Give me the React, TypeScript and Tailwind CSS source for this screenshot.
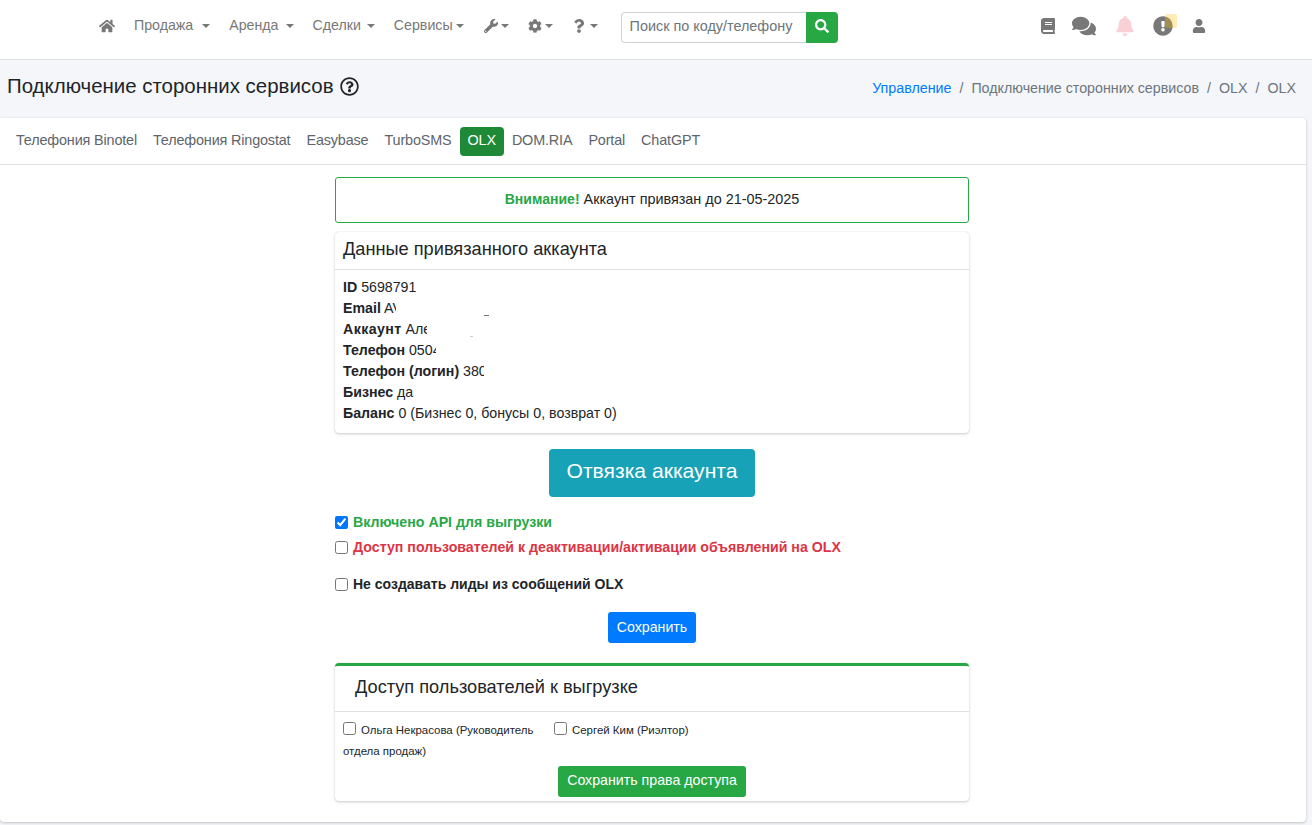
import { FaHome, FaWrench, FaCog, FaQuestion, FaSearch, FaBook, FaComments, FaBell, FaExclamationCircle, FaUser, FaRegQuestionCircle } from 'react-icons/fa';

const Caret = ({ ml }: { ml: string }) => (
  <span className={`inline-block align-[2px] border-t-[4.8px] border-x-[4.8px] border-x-transparent border-t-[#787878] ${ml}`} />
);

const tabs = ['Телефония Binotel', 'Телефония Ringostat', 'Easybase', 'TurboSMS', 'OLX', 'DOM.RIA', 'Portal', 'ChatGPT'];

function Nav() {
  return (
    <nav className="h-[60px] bg-white border-b border-[#dee2e6] flex items-start shrink-0">
      <div className="flex items-center h-[52px] text-[14.2px] text-[#787878]">
        <FaHome className="ml-[99px] text-[16px]" />
        <span className="ml-[19px]">Продажа<Caret ml="ml-[9px]" /></span>
        <span className="ml-[19px]">Аренда<Caret ml="ml-[8px]" /></span>
        <span className="ml-[18px]">Сделки<Caret ml="ml-[6px]" /></span>
        <span className="ml-[19px]">Сервисы<Caret ml="ml-[3px]" /></span>
        <FaWrench className="ml-[20px] text-[14px]" /><Caret ml="ml-[3px]" />
        <FaCog className="ml-[19px] text-[14px]" /><Caret ml="ml-[3px]" />
        <FaQuestion className="ml-[19px] text-[14px]" /><Caret ml="ml-[4px]" />
        <div className="ml-[23px] mt-[3px] flex">
          <input
            placeholder="Поиск по коду/телефону"
            className="w-[185px] h-[31px] pl-2 pb-[3px] text-[14.4px] bg-white border border-[#ced4da] border-r-0 rounded-l-[4px] placeholder:text-[#6c757d] outline-none"
          />
          <div className="w-[32px] h-[31px] pb-[3px] bg-[#28a745] rounded-r-[4px] flex items-center justify-center text-white text-[14px]">
            <FaSearch />
          </div>
        </div>
        <FaBook className="ml-[202px] text-[16px]" />
        <FaComments className="ml-[16px] text-[24px]" />
        <FaBell className="ml-[19px] text-[20px] text-[#f8d0d5]" />
        <span className="relative ml-[18px]">
          <FaExclamationCircle className="text-[20px]" />
          <span className="absolute left-[12px] top-[-2px] w-[12px] h-[14px] rounded-[2px] bg-[#ffc107]/30" />
        </span>
        <FaUser className="ml-[19px] text-[14px]" />
      </div>
    </nav>
  );
}

function Header() {
  return (
    <div className="h-[58px] flex justify-between items-start pl-[7px] pr-[16px]">
      <h1 className="mt-[13px] text-[20.45px] leading-[26px] text-[#212529] flex items-center gap-[6px]">
        Подключение сторонних сервисов
        <FaRegQuestionCircle className="text-[19px]" />
      </h1>
      <div className="mt-[18px] text-[14.25px] leading-[21px] text-[#6c757d] flex gap-[8px]">
        <span className="text-[#007bff]">Управление</span>
        <span>/</span>
        <span>Подключение сторонних сервисов</span>
        <span>/</span>
        <span>OLX</span>
        <span>/</span>
        <span>OLX</span>
      </div>
    </div>
  );
}

// white patch laid over the hidden part of the value, as in the reference
function Hidden({ at, children, speck }: { at: string; children: string; speck?: string }) {
  return (
    <span className="relative">
      {children}
      <span className={`absolute top-0 bottom-0 w-[100px] bg-white ${at}`} />
      {speck && <span className={`absolute h-px ${speck}`} />}
    </span>
  );
}

function AccountCard() {
  return (
    <div className="mt-[9px] bg-white rounded-[4px] shadow-[0_0_1px_rgba(0,0,0,.125),0_1px_3px_rgba(0,0,0,.2)]">
      <div className="h-[38px] px-[8px] pb-[1px] flex items-center border-b border-[#dfdfdf] text-[18.2px] text-[#212529]">
        Данные привязанного аккаунта
      </div>
      <div className="px-[8px] pt-[7px] pb-[9px] text-[14.2px] leading-[21px] text-[#212529]">
        <div><b>ID</b> 5698791</div>
        <div><b>Email</b> <Hidden at="left-[12px]" speck="left-[100px] top-[15px] w-[5px] bg-[#777777]">AV</Hidden></div>
        <div><b className="tracking-[0.4px]">Аккаунт</b> <Hidden at="left-[21px]" speck="left-[64px] top-[15px] w-[3px] bg-[#cccccc]">Алексей</Hidden></div>
        <div><b>Телефон</b> <Hidden at="left-[27px]">0504</Hidden></div>
        <div><b>Телефон (логин)</b> <Hidden at="left-[21px]">3805</Hidden></div>
        <div><b>Бизнес</b> да</div>
        <div><b>Баланс</b> 0 (Бизнес 0, бонусы 0, возврат 0)</div>
      </div>
    </div>
  );
}

function Check({ checked, label, color }: { checked?: boolean; label: string; color: string }) {
  return (
    <label className={`flex items-center gap-[5px] font-bold leading-[21px] ${color}`}>
      <input type="checkbox" defaultChecked={checked} className="w-[13px] h-[13px] m-0 accent-[#0075ff]" />
      {label}
    </label>
  );
}

function AccessCard() {
  return (
    <div className="mt-[20px] bg-white rounded-[4px] border-t-[3px] border-[#28a745] shadow-[0_0_1px_rgba(0,0,0,.125),0_1px_3px_rgba(0,0,0,.2)]">
      <div className="h-[46px] pl-[20px] pb-[1px] flex items-center border-b border-[#dfdfdf] text-[18.2px] text-[#212529]">
        Доступ пользователей к выгрузке
      </div>
      <div className="px-[8px] pt-[8px] pb-[4px]">
        <div className="flex text-[11.45px] leading-[21px] text-[#212529]">
          <label className="w-[211px]">
            <input type="checkbox" className="w-[13px] h-[13px] m-0 mr-[5px] align-[-1px]" />
            Ольга Некрасова (Руководитель отдела продаж)
          </label>
          <label>
            <input type="checkbox" className="w-[13px] h-[13px] m-0 mr-[5px] align-[-1px]" />
            Сергей Ким (Риэлтор)
          </label>
        </div>
        <div className="flex justify-center mt-[4px]">
          <button className="h-[31px] w-[188px] pb-[1px] bg-[#28a745] text-white text-[14.2px] rounded-[3px]">Сохранить права доступа</button>
        </div>
      </div>
    </div>
  );
}

export default function App() {
  return (
    <div className="flex flex-col h-[825px] overflow-hidden bg-[#f4f6f9]" style={{ fontFamily: '"Liberation Sans", Arial, sans-serif' }}>
      <Nav />
      <Header />
      <section className="mr-[6px] h-[704px] bg-white rounded-tr-[4px] rounded-b-[4px] shadow-[0_0_1px_rgba(0,0,0,.125),0_1px_3px_rgba(0,0,0,.2)]">
        <div className="h-[47px] px-[8px] flex items-center border-b border-[#dfdfdf] text-[14.4px] tracking-[-0.15px]">
          {tabs.map((t) => (
            <span key={t} className={t === 'OLX' ? 'h-[29px] px-[8px] flex items-center rounded-[4px] bg-[#1e8a37] text-white' : 'px-[8px] text-[#5d656c]'}>
              {t}
            </span>
          ))}
        </div>
        <div className="w-[634px] ml-[335px] pt-[12px]">
          <div className="h-[46px] border border-[#28a745] rounded-[3px] flex items-center justify-center text-[14.4px] text-[#212529]">
            <b className="text-[14.05px] text-[#28a745]">Внимание!</b>&nbsp;Аккаунт привязан до 21-05-2025
          </div>
          <AccountCard />
          <div className="flex justify-center mt-[16px]">
            <button className="h-[48px] w-[206px] pb-[5px] bg-[#17a2b8] text-white text-[21.1px] rounded-[4px]">Отвязка аккаунта</button>
          </div>
          <div className="mt-[15px]"><Check checked label="Включено API для выгрузки" color="text-[14.2px] text-[#28a745]" /></div>
          <div className="mt-[4px]"><Check label="Доступ пользователей к деактивации/активации объявлений на OLX" color="text-[14.2px] text-[#dc3545]" /></div>
          <div className="mt-[16px]"><Check label="Не создавать лиды из сообщений OLX" color="text-[14px] text-[#212529]" /></div>
          <div className="flex justify-center mt-[17px]">
            <button className="h-[31px] w-[88px] bg-[#007bff] text-white text-[14.2px] rounded-[3px]">Сохранить</button>
          </div>
          <AccessCard />
        </div>
      </section>
    </div>
  );
}
